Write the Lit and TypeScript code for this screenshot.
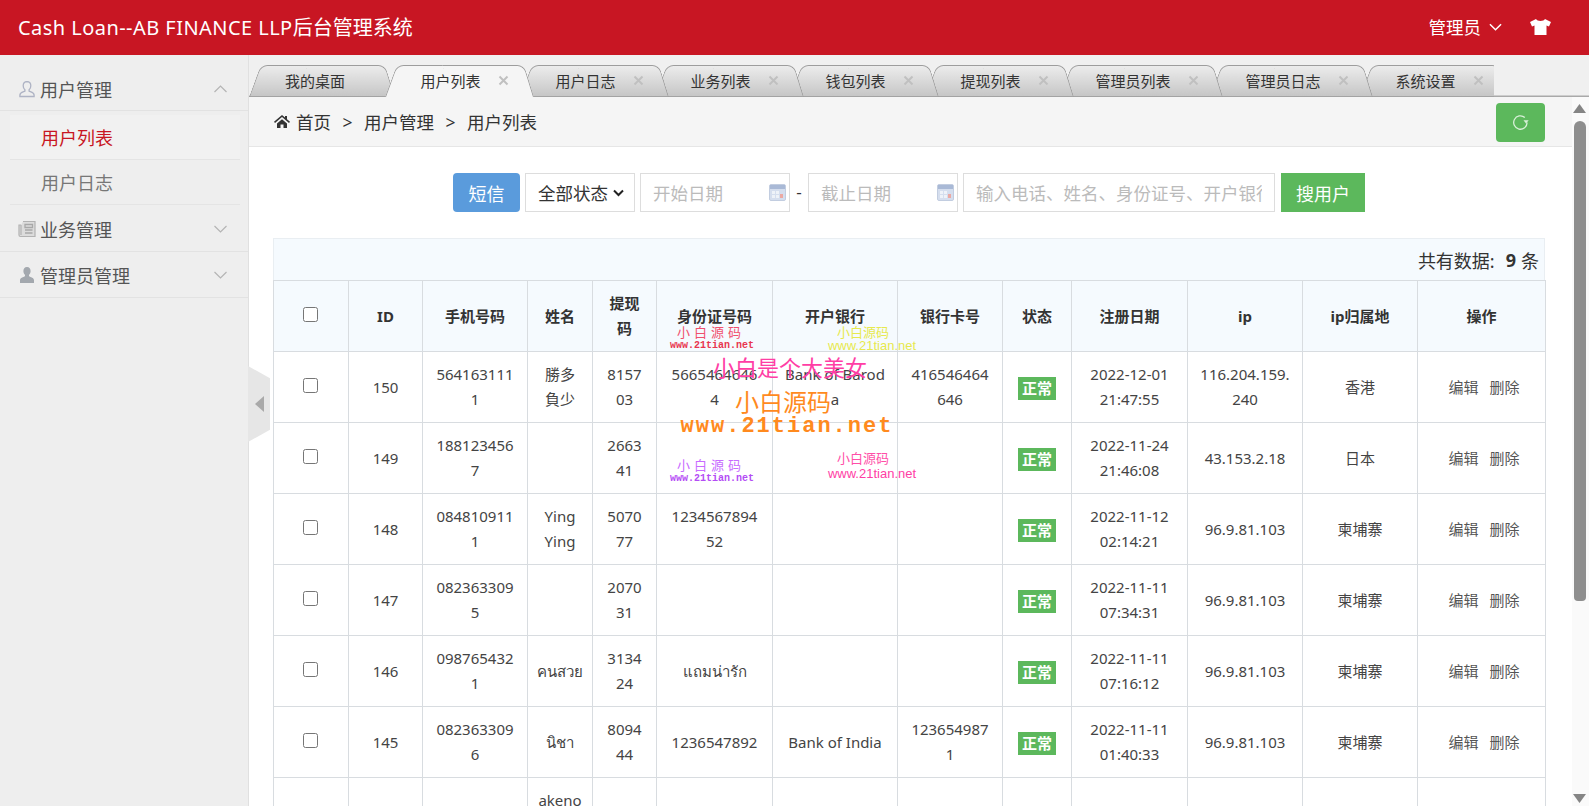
import { LitElement, html, css, nothing } from 'lit';
import { customElement } from 'lit/decorators.js';

const chevron = (up = false) => html`<svg class="chev" viewBox="0 0 14 8"><path d=${up ? 'M1 7l6-6 6 6' : 'M1 1l6 6 6-6'} fill="none" stroke="currentColor"/></svg>`;

const calendar = html`<svg class="cal" viewBox="0 0 17 17">
  <rect x=".5" y=".5" width="16" height="16" rx="1.5" fill="#d5deee" stroke="#c2cde0"/>
  <rect x="1" y="1" width="15" height="4" fill="#a9b9d6"/>
  <rect x="3" y="7" width="3" height="3" fill="#eef2f8"/><rect x="7" y="7" width="3" height="3" fill="#eef2f8"/>
  <rect x="3" y="11" width="3" height="3" fill="#eef2f8"/><rect x="7" y="11" width="3" height="3" fill="#eef2f8"/>
  <rect x="11" y="10" width="3" height="4" fill="#eba9a3"/>
</svg>`;

const tabs = ['用户列表', '用户日志', '业务列表', '钱包列表', '提现列表', '管理员列表', '管理员日志', '系统设置'];

type Row = { id: string; phone: string; name?: string; code: string; card?: string; bank?: string; account?: string; date: string; ip: string; area: string };

const rows: Row[] = [
  { id: '150', phone: '5641631111', name: '勝多\n負少', code: '815703', card: '56654646464', bank: 'Bank of Baroda', account: '416546464646', date: '2022-12-01 21:47:55', ip: '116.204.159.240', area: '香港' },
  { id: '149', phone: '1881234567', code: '266341', date: '2022-11-24 21:46:08', ip: '43.153.2.18', area: '日本' },
  { id: '148', phone: '0848109111', name: 'Ying\nYing', code: '507077', card: '123456789452', date: '2022-11-12 02:14:21', ip: '96.9.81.103', area: '柬埔寨' },
  { id: '147', phone: '0823633095', code: '207031', date: '2022-11-11 07:34:31', ip: '96.9.81.103', area: '柬埔寨' },
  { id: '146', phone: '0987654321', name: 'คนสวย', code: '313424', card: 'แถมน่ารัก', date: '2022-11-11 07:16:12', ip: '96.9.81.103', area: '柬埔寨' },
  { id: '145', phone: '0823633096', name: 'นิชา', code: '809444', card: '1236547892', bank: 'Bank of India', account: '1236549871', date: '2022-11-11 01:40:33', ip: '96.9.81.103', area: '柬埔寨' },
];

const widths = [75, 74, 105, 65, 64, 116, 125, 105, 69, 116, 115, 115, 128];
const heads = ['ID', '手机号码', '姓名', '提现码', '身份证号码', '开户银行', '银行卡号', '状态', '注册日期', 'ip', 'ip归属地', '操作'];

// watermark stamped over the table: [text, centre x, centre y, size, colour, letter spacing, font class]
const marks: [string, number, number, number, string, number, string][] = [
  ['小白源码', 462, 235, 13, '#f0506e', 4, ''],
  ['www.21tian.net', 463, 249, 10, '#e8364f', 0, 'mono'],
  ['小白源码', 614, 235, 13, '#e7e94e', 0, ''],
  ['www.21tian.net', 623, 248, 13, '#e7e94e', 0, 'sans'],
  ['小白是个大美女', 541, 270, 22, '#ff3ea5', 0, ''],
  ['小白源码', 534, 305, 24, '#ff8a1e', 0, ''],
  ['www.21tian.net', 538, 330, 22, '#ff8a1e', 2, 'mono'],
  ['小白源码', 462, 368, 13, '#c86cff', 4, ''],
  ['www.21tian.net', 463, 382, 10, '#b44cf5', 0, 'mono'],
  ['小白源码', 614, 361, 13, '#ff4fa8', 0, ''],
  ['www.21tian.net', 623, 376, 13, '#ff3ea5', 0, 'sans'],
];

@customElement('app-root')
export class AppRoot extends LitElement {
  static styles = css`
    :host {
      display: flex;
      flex-direction: column;
      height: 100vh;
      overflow: hidden;
      font-family: "Noto Sans", "Noto Sans CJK SC", sans-serif;
      color: #333;
    }
    svg { display: block; flex: none; }

    .top {
      flex: none;
      height: 55px;
      box-sizing: border-box;
      padding: 0 38px 2px 18px;
      background: #c81623;
      color: #fff;
      display: flex;
      align-items: center;
      font-size: 20px;
    }
    .logo { flex: 1; }
    .logo span { letter-spacing: .45px; }
    .user { font-size: 17.5px; display: flex; align-items: center; gap: 8px; margin-right: 28px; }
    .user .chev { width: 13px; height: 8px; stroke-width: 1.6; }
    .shirt { width: 21px; height: 16px; }

    .body { flex: 1; display: flex; min-height: 0; }

    .side {
      flex: none;
      width: 249px;
      box-sizing: border-box;
      padding-top: 10px;
      background: #eeeeee;
      border-right: 1px solid #e0e0e0;
      font-size: 18px;
    }
    .menu {
      height: 46px;
      box-sizing: border-box;
      padding: 2px 20px 0 18px;
      display: flex;
      align-items: center;
      border-bottom: 1px solid #e2e2e2;
      color: #555;
    }
    .sub + .menu { height: 47px; }
    .menu + .menu { padding-top: 0; }
    .menu .ico { width: 18px; height: 18px; margin-right: 4px; }
    .menu span { flex: 1; }
    .menu .chev { width: 15px; height: 8px; color: #b4b4b4; stroke-width: 1.2; }
    .sub {
      height: 45px;
      box-sizing: border-box;
      margin: 0 8px 0 10px;
      padding-left: 31px;
      display: flex;
      align-items: center;
      border-bottom: 1px solid #e4e4e4;
      color: #777;
    }
    .sub.on { color: #c81623; background: #f1f1f1; margin-top: 4px; }

    .main { flex: 1; min-width: 0; display: flex; flex-direction: column; position: relative; }

    .tabs {
      flex: none;
      height: 42px;
      box-sizing: border-box;
      padding-top: 10px;
      background: #f0f0f0;
      box-shadow: inset 0 -1.5px #a9a9a9;
    }
    .strip { width: 1245px; height: 32px; display: flex; overflow: hidden; }
    .tab {
      position: relative;
      flex: none;
      height: 32px;
      box-sizing: border-box;
      margin-left: -14px;
      padding: 0 25px 2px 36px;
      display: flex;
      align-items: center;
      font-size: 15px;
      color: #333;
    }
    .tab:first-child { margin-left: 0; width: 146px; margin-right: 3.5px; }
    .tab::before, .tab::after {
      content: "";
      position: absolute;
      top: 0;
      bottom: 0;
      width: 55%;
      z-index: -1;
      box-sizing: border-box;
      background: linear-gradient(#ececec, #c6c6c6);
      border-top: 1px solid #9d9d9d;
      border-bottom: 1px solid #a3a3a3;
    }
    .tab::before {
      left: 0;
      border-left: 1px solid #9d9d9d;
      border-top-left-radius: 7px;
      transform-origin: bottom left;
      transform: skewX(-20deg);
    }
    .tab::after {
      right: 0;
      border-right: 1px solid #9d9d9d;
      border-top-right-radius: 7px;
      transform-origin: bottom right;
      transform: skewX(17deg);
    }
    .tab.on::before, .tab.on::after { background: #f5f5f5; border-bottom: 0; }
    .close { width: 11px; height: 11px; margin-left: 17px; color: #c0c0c0; }

    .content { flex: 1; min-height: 0; display: flex; }
    .scroller { flex: 1; min-width: 0; overflow: hidden; background: #fff; }

    .rail {
      flex: none;
      width: 17px;
      box-sizing: border-box;
      padding: 7px 0 3px 1px;
      background: #fafafa;
      display: flex;
      flex-direction: column;
      align-items: flex-start;
    }
    .rail svg { width: 13px; height: 9px; }
    .thumb { width: 12px; height: 480px; margin: 8px 0 0 1px; background: #8e8e8e; border-radius: 6px 6px 4px 4px; }
    .rail .down { margin-top: auto; }

    .crumbs {
      height: 50px;
      box-sizing: border-box;
      display: flex;
      align-items: center;
      padding: 0 27px 0 25px;
      background: #f5f5f5;
      border-bottom: 1px solid #e6e6e6;
      font-size: 17.5px;
    }
    .crumbs .home { width: 16px; height: 13px; margin-right: 6px; }
    .crumbs i { font-style: normal; margin: 0 11.5px; }
    .refresh {
      margin-left: auto;
      width: 49px;
      height: 39px;
      margin-top: 1px;
      background: #5cb85c;
      border-radius: 4px;
      display: flex;
      align-items: center;
      justify-content: center;
    }
    .refresh svg { width: 17px; height: 17px; }

    .tools {
      display: flex;
      justify-content: center;
      align-items: stretch;
      height: 39px;
      margin: 26px 27px 26px 24px;
      font-size: 17.5px;
    }
    .btn {
      display: flex;
      align-items: center;
      justify-content: center;
      color: #fff;
      font-size: 18px;
    }
    .btn.sms { width: 67px; background: #5a9bdc; border-radius: 4px; margin-right: 5px; }
    .btn.go { width: 84px; background: #5cb85c; margin-left: 6px; }
    .select {
      width: 110px;
      box-sizing: border-box;
      border: 1px solid #dddddd;
      display: flex;
      align-items: center;
      padding-left: 12px;
      margin-right: 5px;
      gap: 5px;
    }
    .select svg { width: 11px; height: 8px; }
    .field {
      width: 150px;
      box-sizing: border-box;
      border: 1px solid #dddddd;
      display: flex;
      align-items: center;
      padding-right: 3px;
    }
    .field.wide { width: 312px; padding-right: 0; margin-left: 5px; }
    .field input {
      flex: 1;
      min-width: 0;
      border: 0;
      outline: 0;
      padding: 0 12px;
      font: inherit;
      background: transparent;
    }
    .field input::placeholder { color: #bbbbbb; opacity: 1; }
    .cal { width: 17px; height: 17px; }
    .dash { width: 18px; text-align: center; line-height: 37px; font-size: 17px; }

    .page { position: relative; }
    .wrap { margin: 0 27px 0 24px; }
    .count {
      height: 42px;
      box-sizing: border-box;
      background: #f5fafe;
      border: 1px solid #e9eef2;
      border-bottom: 0;
      display: flex;
      align-items: center;
      justify-content: flex-end;
      padding-right: 5px;
      font-size: 18px;
    }
    .count b { margin: 0 5px 0 11px; }

    table { width: 1272px; table-layout: fixed; border-collapse: collapse; font-size: 15px; }
    th, td {
      height: 71px;
      box-sizing: border-box;
      padding: 10px 12px;
      border: 1px solid #d8dce0;
      line-height: 25px;
      text-align: center;
      vertical-align: middle;
      word-break: break-all;
    }
    th { background: #f5fafe; font-weight: 700; }
    td { color: #444; }
    td.name { white-space: pre; padding-left: 0; padding-right: 0; }
    td.date { word-break: normal; }
    input[type="checkbox"] { width: 15px; height: 15px; margin: 0 2px 0 0; }
    tr.tall td { height: 120px; }
    tr.tall td.name { vertical-align: top; }
    .badge {
      display: inline-block;
      padding: 0 4px;
      height: 23px;
      line-height: 23px;
      background: #5cb85c;
      color: #fff;
      font-weight: 700;
      vertical-align: middle;
    }
    .ops { padding-left: 17px; color: #555; white-space: nowrap; }
    .ops span + span { margin-left: 11px; }

    .mark {
      position: absolute;
      line-height: 1;
      white-space: nowrap;
      transform: translate(-50%, -50%);
      pointer-events: none;
    }
    .mark.mono { font-family: "Liberation Mono", monospace; font-weight: 700; }
    .mark.sans { font-family: "Liberation Sans", sans-serif; }

    .handle {
      position: absolute;
      left: -1px;
      top: 311px;
      width: 22px;
      height: 76px;
      background: #e6e6e6;
      clip-path: polygon(0 0, 100% 16%, 100% 84%, 0 100%);
      display: flex;
      align-items: center;
      padding-left: 7px;
      box-sizing: border-box;
    }
    .handle svg { width: 9px; height: 16px; }
  `;

  renderRow(r: Row) {
    return html`<tr>
      <td><input type="checkbox" /></td>
      <td>${r.id}</td>
      <td>${r.phone}</td>
      <td class="name">${r.name ?? nothing}</td>
      <td>${r.code}</td>
      <td>${r.card ?? nothing}</td>
      <td>${r.bank ?? nothing}</td>
      <td>${r.account ?? nothing}</td>
      <td><span class="badge">正常</span></td>
      <td class="date">${r.date}</td>
      <td>${r.ip}</td>
      <td>${r.area}</td>
      <td class="ops"><span>编辑</span><span>删除</span></td>
    </tr>`;
  }

  render() {
    return html`
      <div class="top">
        <div class="logo"><span>Cash Loan--AB FINANCE LLP</span>后台管理系统</div>
        <div class="user">管理员 ${chevron()}</div>
        <svg class="shirt" viewBox="0 0 21 16"><path d="M6 0L0 3l2 4.5L4.5 6.5V16h12V6.5L19 7.5 21 3l-6-3c-1 2.5-8 2.5-9 0z" fill="#fff"/></svg>
      </div>
      <div class="body">
        <div class="side">
          <div class="menu">
            <svg class="ico" viewBox="0 0 18 18"><path d="M9 1.5c-2.6 0-3.800 2-3.800 4.200 0 1.800.7 3.200 1.700 4.100v1.300c-1.500.8-5 1.400-5 3.900v1.500h14.200V15c0-2.500-3.500-3.100-5-3.900V9.800c1-.9 1.700-2.300 1.700-4.100 0-2.200-1.200-4.200-3.800-4.200z" fill="none" stroke="#aeb3c4" stroke-width="1.3"/></svg>
            <span>用户管理</span>${chevron(true)}
          </div>
          <div class="sub on">用户列表</div>
          <div class="sub">用户日志</div>
          <div class="menu">
            <svg class="ico" viewBox="0 0 18 18"><path d="M5 1.5h12v15H2.500a1.500 1.500 0 0 1-1.500-1.500V5h2" fill="#dcdcdc" stroke="#b2b2b2" stroke-width="1.2"/><path d="M7 4.5h7.500v3H7zM7 10h7.500M7 13h7.500" fill="none" stroke="#a8a8a8" stroke-width="1.3"/><path d="M3 5v10" stroke="#b2b2b2" stroke-width="1.2"/></svg>
            <span>业务管理</span>${chevron()}
          </div>
          <div class="menu">
            <svg class="ico" viewBox="0 0 18 18"><path d="M9 1c-2.500 0-3.600 1.900-3.600 3.900 0 1.700.7 3 1.600 3.900v1.500c-1.600.9-5 1.500-5 4V17h14v-2.700c0-2.500-3.400-3.100-5-4V8.800c.9-.9 1.600-2.200 1.600-3.900C12.600 2.900 11.500 1 9 1z" fill="#a3a8ae"/></svg>
            <span>管理员管理</span>${chevron()}
          </div>
        </div>
        <div class="main">
          <div class="tabs">
            <div class="strip">
              <div class="tab" style="z-index:${tabs.length + 1}">我的桌面</div>
              ${tabs.map((t, i) => html`<div class="tab ${i === 0 ? 'on' : ''}" style="z-index:${i === 0 ? 50 : tabs.length - i}">
                ${t}
                <svg class="close" viewBox="0 0 11 11"><path d="M1.5 1.5l8 8M9.5 1.5l-8 8" stroke="currentColor" stroke-width="2"/></svg>
              </div>`)}
            </div>
          </div>
          <div class="content">
            <div class="scroller">
              <div class="page">
                <div class="crumbs">
                  <svg class="home" viewBox="0 0 16 13"><path d="M8 0L0 6.800l1 1.200 7-5.900L15 8l1-1.200-3-2.500V1h-2v1.600zM3 8.500V13h3.500V9.500h3V13H13V8.500L8 4.300z" fill="#333"/></svg>
                  首页<i>&gt;</i>用户管理<i>&gt;</i>用户列表
                  <div class="refresh">
                    <svg viewBox="0 0 17 17"><path d="M12.800 3.500a6.700 6.700 0 1 0 2.300 5" fill="none" stroke="#d9f0d9" stroke-width="1.3"/><path d="M11.500 6.200h5.200L14 9.500z" fill="#d9f0d9"/></svg>
                  </div>
                </div>
                <div class="tools">
                  <div class="btn sms">短信</div>
                  <div class="select">全部状态<svg viewBox="0 0 11 8"><path d="M1 1.5l4.500 4.500L10 1.500" fill="none" stroke="#222" stroke-width="2"/></svg></div>
                  <div class="field"><input placeholder="开始日期" />${calendar}</div>
                  <div class="dash">-</div>
                  <div class="field"><input placeholder="截止日期" />${calendar}</div>
                  <div class="field wide"><input placeholder="输入电话、姓名、身份证号、开户银行卡号搜索" /></div>
                  <div class="btn go">搜用户</div>
                </div>
                <div class="wrap">
                  <div class="count">共有数据: <b>9</b> 条</div>
                  <table>
                    <colgroup>${widths.map((w) => html`<col style="width:${w}px" />`)}</colgroup>
                    <thead>
                      <tr>
                        <th><input type="checkbox" /></th>
                        ${heads.map((h) => html`<th>${h}</th>`)}
                      </tr>
                    </thead>
                    <tbody>
                      ${rows.map((r) => this.renderRow(r))}
                      <tr class="tall">
                        ${widths.map((_, i) => html`<td class=${i === 3 ? 'name' : ''}>${i === 3 ? 'akeno' : nothing}</td>`)}
                      </tr>
                    </tbody>
                  </table>
                </div>
                ${marks.map(([text, x, y, size, color, spacing, font]) => html`<div
                  class="mark ${font}"
                  style="left:${x}px;top:${y}px;font-size:${size}px;color:${color};letter-spacing:${spacing}px"
                >${text}</div>`)}
              </div>
            </div>
            <div class="rail">
              <svg viewBox="0 0 13 9"><path d="M6.5 0L13 9H0z" fill="#858585"/></svg>
              <div class="thumb"></div>
              <svg class="down" viewBox="0 0 13 9"><path d="M6.5 9L13 0H0z" fill="#858585"/></svg>
            </div>
          </div>
          <div class="handle"><svg viewBox="0 0 9 16"><path d="M9 0v16L0 8z" fill="#a9a9a9"/></svg></div>
        </div>
      </div>
    `;
  }
}
